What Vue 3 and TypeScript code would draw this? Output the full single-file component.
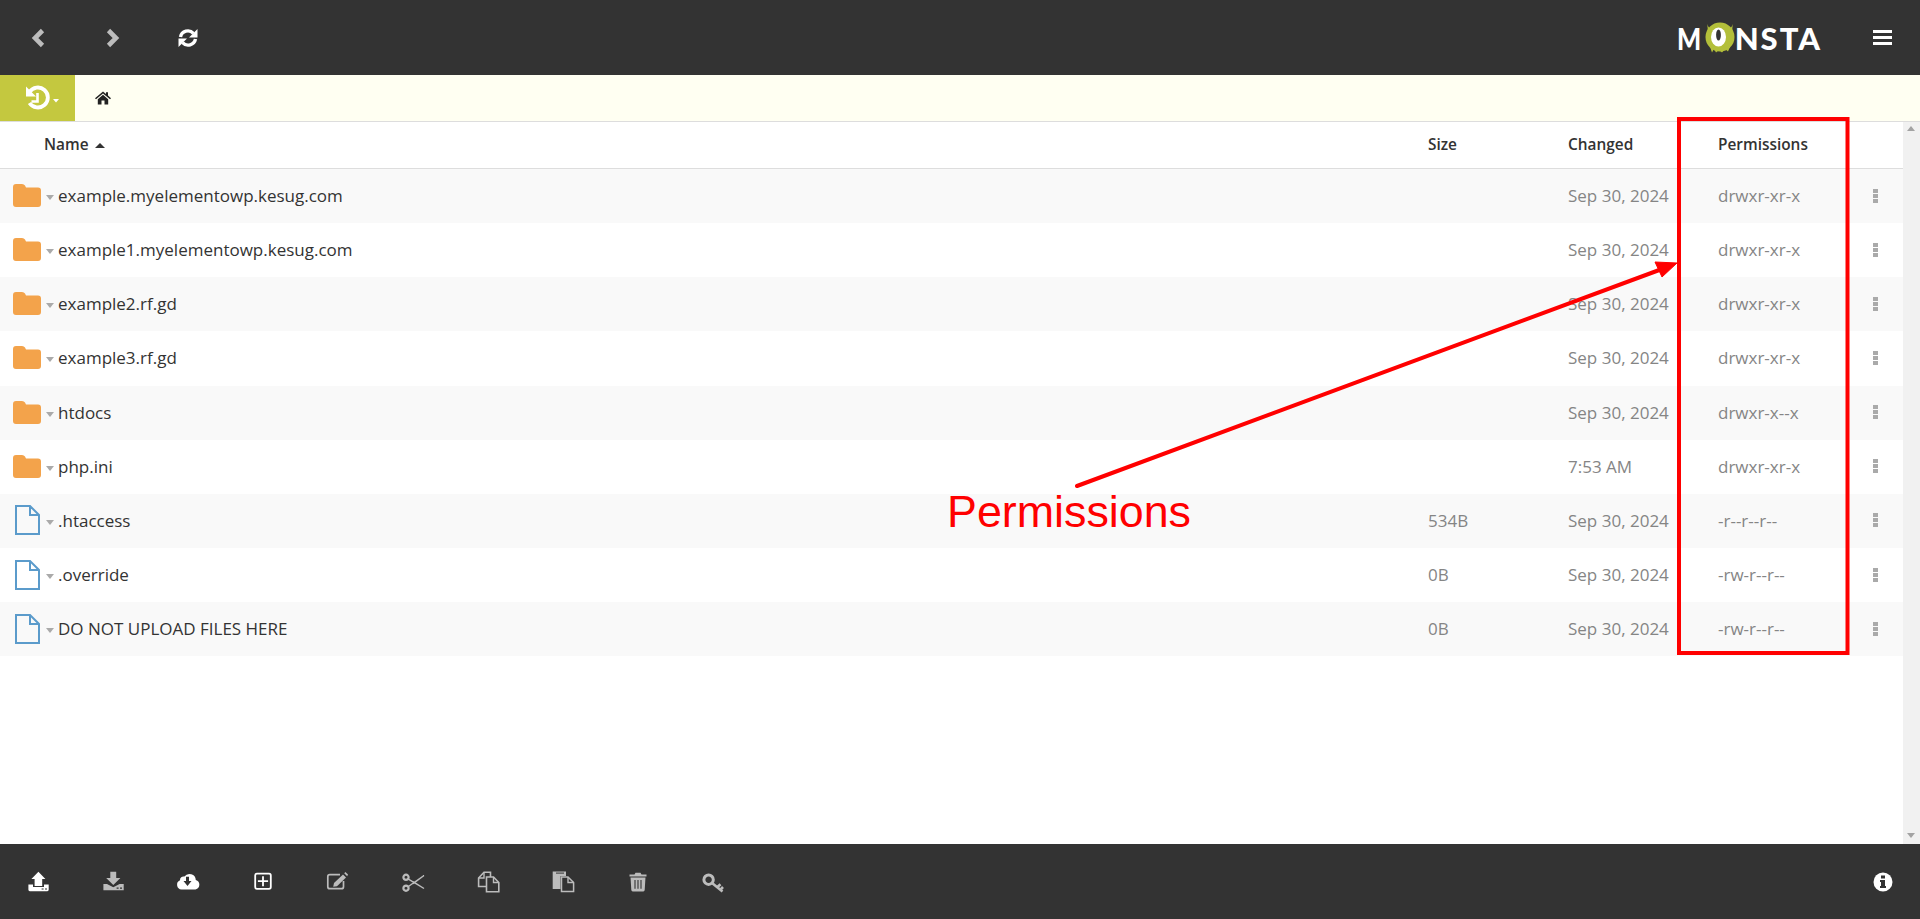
<script setup lang="ts">
interface Row {
  name: string
  kind: 'folder' | 'file'
  size: string
  changed: string
  perms: string
}

interface Part {
  d: string
  fill?: string
  stroke?: string
  sw?: number
}

interface Tool {
  id: string
  color: string
  parts: Part[]
}

const rows: Row[] = [
  { name: 'example.myelementowp.kesug.com', kind: 'folder', size: '', changed: 'Sep 30, 2024', perms: 'drwxr-xr-x' },
  { name: 'example1.myelementowp.kesug.com', kind: 'folder', size: '', changed: 'Sep 30, 2024', perms: 'drwxr-xr-x' },
  { name: 'example2.rf.gd', kind: 'folder', size: '', changed: 'Sep 30, 2024', perms: 'drwxr-xr-x' },
  { name: 'example3.rf.gd', kind: 'folder', size: '', changed: 'Sep 30, 2024', perms: 'drwxr-xr-x' },
  { name: 'htdocs', kind: 'folder', size: '', changed: 'Sep 30, 2024', perms: 'drwxr-x--x' },
  { name: 'php.ini', kind: 'folder', size: '', changed: '7:53 AM', perms: 'drwxr-xr-x' },
  { name: '.htaccess', kind: 'file', size: '534B', changed: 'Sep 30, 2024', perms: '-r--r--r--' },
  { name: '.override', kind: 'file', size: '0B', changed: 'Sep 30, 2024', perms: '-rw-r--r--' },
  { name: 'DO NOT UPLOAD FILES HERE', kind: 'file', size: '0B', changed: 'Sep 30, 2024', perms: '-rw-r--r--' },
]

const GREY = '#bcbcbc'
const DARK = '#333333'

const tools: Tool[] = [
  {
    id: 'upload',
    color: '#fff',
    parts: [
      { d: 'M12.4 1.8 L19.4 9 H16.2 V16 H8.6 V9 H5.4 Z' },
      { d: 'M2.4 14.5 H7 V17 H18 V14.5 H22.7 V19.8 Q22.7 21.2 21.3 21.2 H3.8 Q2.4 21.2 2.4 19.8 Z' },
      { d: 'M15.6 18.4 h2 v1.2 h-2 z M19 18.4 h2 v1.2 h-2 z', fill: DARK },
    ],
  },
  {
    id: 'download',
    color: GREY,
    parts: [
      { d: 'M9.3 1.8 H15.2 V8 H19.4 L12.3 15 L5.2 8 H9.3 Z' },
      { d: 'M2.4 14 H6 L12.3 17.2 L18.6 14 H22.7 V20.2 H2.4 Z' },
      { d: 'M15.6 17.6 h2 v1.2 h-2 z M19 17.6 h2 v1.2 h-2 z', fill: DARK },
    ],
  },
  {
    id: 'cloud',
    color: '#fff',
    parts: [
      { d: 'M5.5 19.5 A4.8 4.8 0 0 1 4 10.3 A3.5 3.5 0 0 1 8.4 6.6 A6.3 6.3 0 0 1 19.8 10 A4.9 4.9 0 0 1 19.5 19.5 Z' },
      { d: 'M10 6.8 H13 V11 H15.5 L11.5 16 L7.5 11 H10 Z', fill: DARK },
    ],
  },
  {
    id: 'new',
    color: '#fff',
    parts: [
      { d: 'M6 3.7 H18 A1.8 1.8 0 0 1 19.8 5.5 V17 A1.8 1.8 0 0 1 18 18.8 H6 A1.8 1.8 0 0 1 4.2 17 V5.5 A1.8 1.8 0 0 1 6 3.7 Z', fill: 'none', stroke: '#fff', sw: 1.8 },
      { d: 'M12 6.2 V16.3 M6.9 11.2 H17.1', fill: 'none', stroke: '#fff', sw: 1.8 },
    ],
  },
  {
    id: 'edit',
    color: GREY,
    parts: [
      { d: 'M14 4.7 H3.8 A2 2 0 0 0 1.8 6.7 V16.7 A2 2 0 0 0 3.8 18.7 H15.5 A2 2 0 0 0 17.5 16.7 V11', fill: 'none', stroke: GREY, sw: 1.7 },
      { d: 'M8 13 L17 4.4 L20 7.4 L11 16.2 L7.2 16.8 Z' },
      { d: 'M18.2 3.2 L19.4 2 L22 4.6 L21.2 6.2 Z' },
    ],
  },
  {
    id: 'cut',
    color: GREY,
    parts: [
      { d: 'M5 7.3 m-2.6 0 a2.6 2.6 0 1 0 5.2 0 a2.6 2.6 0 1 0 -5.2 0 M5 18.2 m-2.6 0 a2.6 2.6 0 1 0 5.2 0 a2.6 2.6 0 1 0 -5.2 0', fill: 'none', stroke: GREY, sw: 2.2 },
      { d: 'M7 8.8 L23 18.5 L12 11.5 M7 16.7 L23 5.5 L12 13.8', fill: 'none', stroke: GREY, sw: 1.4 },
    ],
  },
  {
    id: 'copy',
    color: GREY,
    parts: [
      { d: 'M10 16.5 H2.6 V8 L8 2.3 H14.5 V7', fill: 'none', stroke: GREY, sw: 1.6 },
      { d: 'M8 2.3 V8 H2.6', fill: 'none', stroke: GREY, sw: 1.4 },
      { d: 'M10.5 21.8 V7 H17.5 L22.8 12.5 V21.8 Z', fill: 'none', stroke: GREY, sw: 1.6 },
      { d: 'M17.5 7 V12.5 H22.8', fill: 'none', stroke: GREY, sw: 1.4 },
    ],
  },
  {
    id: 'paste',
    color: GREY,
    parts: [
      { d: 'M1.7 1.5 H15 V6 H9.5 V19 H1.7 Z' },
      { d: 'M5 2.6 H13 V3.6 H5 Z', fill: DARK },
      { d: 'M10.5 7 H17 L22.6 12.5 V21.4 H10.5 Z', fill: 'none', stroke: GREY, sw: 1.5 },
      { d: 'M17 7 V12.5 H22.6', fill: 'none', stroke: GREY, sw: 1.4 },
    ],
  },
  {
    id: 'trash',
    color: GREY,
    parts: [
      { d: 'M3.5 4.4 H8.5 L9.5 2.8 H14.5 L15.5 4.4 H20.5 V6.6 H3.5 Z' },
      { d: 'M4.5 7.6 H19.5 L18.7 20 Q18.5 21.4 17.3 21.4 H6.7 Q5.5 21.4 5.3 20 Z' },
      { d: 'M9 10 V18.8 M12 10 V18.8 M15 10 V18.8', fill: 'none', stroke: DARK, sw: 1.1 },
    ],
  },
  {
    id: 'key',
    color: GREY,
    parts: [
      { d: 'M7.6 5 A4.6 4.6 0 1 0 7.6 14.4 A4.6 4.6 0 1 0 7.6 5 Z', fill: 'none', stroke: GREY, sw: 3 },
      { d: 'M11 13 L21.5 21.4 M16.5 17 L19.5 14.2 M19.5 19.6 L22 17', fill: 'none', stroke: GREY, sw: 2.6 },
    ],
  },
]
</script>

<template>
  <div class="app">
    <header class="topbar">
      <div class="nav">
        <button class="tool">
          <svg width="16" height="20" viewBox="0 0 16 20"><path d="M12.5 2.5 L5 10 L12.5 17.5" fill="none" stroke="#bcbcbc" stroke-width="4.6" /></svg>
        </button>
        <button class="tool">
          <svg width="16" height="20" viewBox="0 0 16 20"><path d="M3.5 2.5 L11 10 L3.5 17.5" fill="none" stroke="#bcbcbc" stroke-width="4.6" /></svg>
        </button>
        <button class="tool">
          <svg width="20" height="20" viewBox="0 0 20 20">
            <path d="M2.5 9 A7.5 7.5 0 0 1 15.4 5.4" fill="none" stroke="#fff" stroke-width="3.4" />
            <path d="M19.5 1 V9.5 H11 Z" fill="#fff" />
            <path d="M17.5 11 A7.5 7.5 0 0 1 4.6 14.6" fill="none" stroke="#fff" stroke-width="3.4" />
            <path d="M0.5 19 V10.5 H9 Z" fill="#fff" />
          </svg>
        </button>
      </div>
      <div class="brand">
        <div class="logo">
          <span class="logo-m">M</span>
          <svg class="eye" width="32" height="32" viewBox="0 0 32 32">
            <path d="M3 0.5 Q3 6 7 8 L4 11 Z M29 0.5 Q29 6 25 8 L28 11 Z" fill="#b3bf3a" />
            <circle cx="16" cy="16" r="14.5" fill="#b3bf3a" />
            <path d="M6 26 L8 31.5 L10 28 L12 31.5 L15 29 L18 31.5 L21 28 L24 30.5 L26 26 Z" fill="#b3bf3a" />
            <ellipse cx="14.5" cy="16" rx="7.5" ry="9.5" fill="#fff" />
            <ellipse cx="14.5" cy="14" rx="2.4" ry="5.5" fill="#333" />
          </svg>
          <span class="logo-rest">NSTA</span>
        </div>
        <button class="tool">
          <svg width="19" height="15" viewBox="0 0 19 15"><path d="M0 0 H19 V3 H0 Z M0 6 H19 V9 H0 Z M0 12 H19 V15 H0 Z" fill="#fff" /></svg>
        </button>
      </div>
    </header>

    <div class="pathbar">
      <div class="history">
        <svg width="75" height="46" viewBox="0 0 75 46">
          <path d="M29.5 17 A10 10 0 1 1 29.5 28" fill="none" stroke="#fff" stroke-width="3.8" />
          <path d="M26 11.5 L36 21.5 H26 Z" fill="#fff" />
          <path d="M37.5 18 V26.5 H31.5" fill="none" stroke="#fff" stroke-width="2.6" />
          <path d="M53 24 H59 L56 27.5 Z" fill="#fff" />
        </svg>
      </div>
      <svg class="home" width="16" height="14" viewBox="0 0 16 14">
        <path d="M8 0.5 L11 3 V1.2 H13 V4.6 L16 7.2 L15 8.2 L8 2.4 L1 8.2 L0 7.2 Z" fill="#222" />
        <path d="M2.8 8.2 L8 3.8 L13.2 8.2 V13.5 H9.5 V9.5 H6.5 V13.5 H2.8 Z" fill="#222" />
      </svg>
    </div>

    <main class="content">
      <div class="listing">
        <div class="row head">
          <div class="cell name-head">Name <i class="sort"></i></div>
          <div class="cell">Size</div>
          <div class="cell">Changed</div>
          <div class="cell">Permissions</div>
          <div></div>
        </div>
        <div v-for="row in rows" :key="row.name" class="row item">
          <div class="cell name">
            <span class="file-icon">
              <svg v-if="row.kind === 'folder'" width="28" height="23" viewBox="0 0 28 23">
                <path d="M3 0 H9 Q11 0 12 1.5 L13 3.5 H25 Q28 3.5 28 6.5 V20 Q28 23 25 23 H3 Q0 23 0 20 V3 Q0 0 3 0 Z" fill="#f3a34b" />
              </svg>
              <svg v-else width="26" height="30" viewBox="0 0 26 30">
                <path d="M2 1 H16 L25 10 V29 H2 Z M16 1 V10 H25" fill="none" stroke="#5b9bcb" stroke-width="2" />
              </svg>
            </span>
            <i class="caret"></i>
            <span>{{ row.name }}</span>
          </div>
          <div class="cell muted">{{ row.size }}</div>
          <div class="cell muted">{{ row.changed }}</div>
          <div class="cell muted">{{ row.perms }}</div>
          <div class="dots"><i></i><i></i><i></i></div>
        </div>
      </div>
      <div class="scrollbar">
        <i class="up"></i>
        <i class="down"></i>
      </div>

      <!-- red annotation drawn over the listing -->
      <svg class="annotation" width="1920" height="722" viewBox="0 122 1920 722">
        <rect x="1679" y="119" width="168.5" height="534" fill="none" stroke="#f00" stroke-width="4" />
        <path d="M1077 486 L1662 269" fill="none" stroke="#f00" stroke-width="4" stroke-linecap="round" />
        <path d="M1677 263 L1655 262 L1662 277 Z" fill="#f00" stroke="#f00" />
        <text x="947" y="527" class="label">Permissions</text>
      </svg>
    </main>

    <footer class="bottombar">
      <div class="tools">
        <button v-for="t in tools" :key="t.id" class="tool">
          <svg width="24" height="24" viewBox="0 0 24 24">
            <path
              v-for="(p, i) in t.parts"
              :key="i"
              :d="p.d"
              :fill="p.fill ?? t.color"
              :stroke="p.stroke ?? 'none'"
              :stroke-width="p.sw ?? 0"
            />
          </svg>
        </button>
      </div>
      <button class="tool">
        <svg width="20" height="20" viewBox="0 0 20 20">
          <circle cx="10" cy="10" r="9.5" fill="#fff" />
          <path d="M8 3.5 H12 V6.5 H8 Z M7 8 H12 V14 H13 V16 H7 V14 H8 V10 H7 Z" fill="#333" />
        </svg>
      </button>
    </footer>
  </div>
</template>

<style scoped>
.app {
  display: flex;
  flex-direction: column;
  height: 919px;
  font-family: "Open Sans", sans-serif;
  font-size: 17px;
  color: #333;
  background: #fff;
  overflow: hidden;
}

.topbar,
.bottombar {
  flex: none;
  display: flex;
  justify-content: space-between;
  align-items: center;
  height: 75px;
  background: #333;
}

.nav,
.tools,
.brand {
  display: flex;
  align-items: center;
}

.tool {
  display: flex;
  align-items: center;
  justify-content: center;
  width: 75px;
  height: 75px;
  padding: 0;
  border: 0;
  background: none;
}

.logo {
  display: flex;
  align-items: center;
  margin-right: 25px;
  font-family: Lato, sans-serif;
  font-weight: 900;
  font-size: 31px;
  color: #fff;
}

.logo-m {
  width: 27px;
  transform: scaleX(0.82);
  transform-origin: left;
}

.logo-rest {
  margin-left: -1px;
  margin-right: -2px;
  letter-spacing: 2px;
}

.eye {
  margin-top: -2px;
}

.pathbar {
  flex: none;
  display: flex;
  align-items: center;
  height: 46px;
  background: #fffff2;
  border-bottom: 1px solid #ddd;
}

.history {
  width: 75px;
  height: 46px;
  background: #c4c83f;
}

.history svg {
  display: block;
}

.home {
  margin-left: 20px;
}

.content {
  position: relative;
  flex: 1;
  display: flex;
  min-height: 0;
}

.listing {
  flex: 1;
  min-width: 0;
}

.row {
  display: grid;
  grid-template-columns: 1fr 140px 150px 132px 53px;
  align-items: center;
}

.head {
  height: 45px;
  padding-bottom: 1px;
  border-bottom: 1px solid #ddd;
  font-size: 15.4px;
  font-weight: 600;
}

.name-head {
  padding-left: 44px;
}

.sort {
  display: inline-block;
  margin-left: 2px;
  vertical-align: 2px;
  border: 5px solid transparent;
  border-top: 0;
  border-bottom: 5px solid #333;
}

.item {
  height: 53.15px;
  padding-bottom: 1px;
}

.item:nth-child(even) {
  background: #f9f9f9;
}

.name {
  display: flex;
  align-items: center;
}

.file-icon {
  display: flex;
  justify-content: center;
  width: 28px;
  margin: 0 5px 0 13px;
}

.caret {
  margin: 4px 4px 0 0;
  border: 4.5px solid transparent;
  border-top: 5px solid #aaa;
  border-bottom: 0;
}

.muted {
  color: #858585;
}

.dots {
  display: flex;
  flex-direction: column;
  align-items: center;
  gap: 1px;
  padding-right: 1.5px;
}

.dots i {
  width: 5px;
  height: 4px;
  background: #aaa;
}

.scrollbar {
  flex: none;
  position: relative;
  width: 17px;
  background: #f1f1f1;
}

.scrollbar i {
  position: absolute;
  left: 4px;
  border: 4.5px solid transparent;
}

.up {
  top: 4px;
  border-top: 0 !important;
  border-bottom: 5px solid #a3a3a3 !important;
}

.down {
  bottom: 6px;
  border-bottom: 0 !important;
  border-top: 5px solid #a3a3a3 !important;
}

.annotation {
  position: absolute;
  top: 0;
  left: 0;
  pointer-events: none;
  overflow: visible;
}

.label {
  font-family: "Liberation Sans", Arial, sans-serif;
  font-size: 44.8px;
  fill: #f00;
}
</style>
